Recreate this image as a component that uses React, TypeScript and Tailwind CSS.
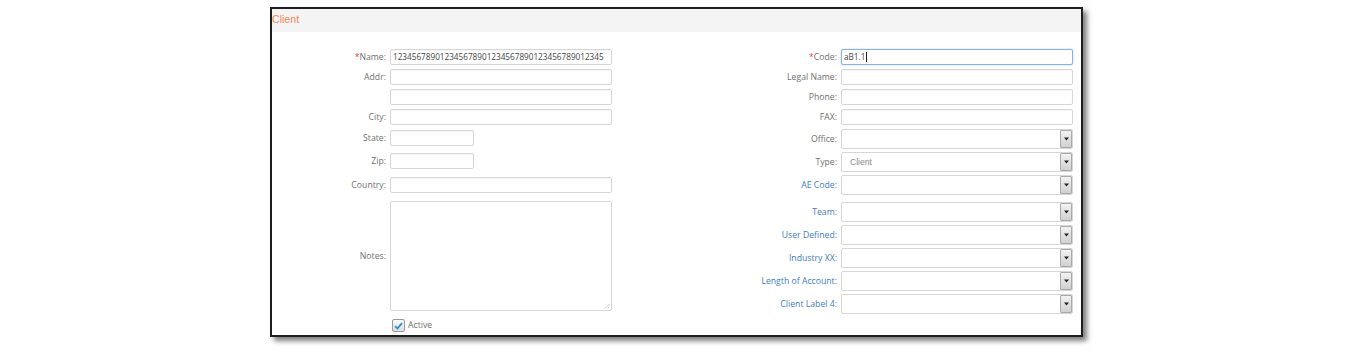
import type { ReactNode } from 'react'

const labelCls = "text-[8.7px] leading-none whitespace-nowrap"

function Label({ children, blue, required, w }: { children: ReactNode; blue?: boolean; required?: boolean; w: string }) {
  return (
    <div className={`${w} shrink-0 pr-[4px] text-right ${labelCls} ${blue ? 'text-[#3f7cc0]' : 'text-[#707070]'}`}>
      {required && <span className="text-[#e8443a]">*</span>}
      {children}
    </div>
  )
}

function TextBox({ w, value, focus }: { w: string; value?: string; focus?: boolean }) {
  return (
    <div
      className={`${w} h-[16px] rounded-[2px] bg-white flex items-center pl-[2px] text-[8.2px] text-[#444] ${
        focus ? 'border border-[#86b3e3] shadow-[0_0_2px_#a9cdf0]' : 'border border-[#d6d6d6] shadow-[inset_0_1px_1px_rgba(0,0,0,0.04)]'
      }`}
    >
      {value}
      {focus && <span className="ml-[1px] inline-block w-[1px] h-[10px] bg-[#222]" />}
    </div>
  )
}

function Select({ value }: { value?: string }) {
  return (
    <div className="w-[232px] h-[20px] rounded-[2px] border border-[#d6d6d6] bg-white flex items-center">
      <div className="flex-1 pl-[8px] text-[8.6px] text-[#8a8a8a]" style={{ fontFamily: '"Liberation Sans", Arial, sans-serif' }}>
        {value}
      </div>
      <div className="w-[12px] h-[18px] border border-[#a9a9a9] rounded-[1px] bg-gradient-to-b from-[#f2f2f2] to-[#d0d0d0] flex items-center justify-center">
        <svg width="5" height="4" viewBox="0 0 5 4">
          <path d="M0 0.5h5L2.5 3.5z" fill="#222" />
        </svg>
      </div>
    </div>
  )
}

function LRow({ label, required, children, mt, h = 'h-[16px]' }: { label: string; required?: boolean; children: ReactNode; mt: string; h?: string }) {
  return (
    <div className={`flex items-center ${mt} ${h}`}>
      <Label w="w-[118px]" required={required}>{label}</Label>
      {children}
    </div>
  )
}

function RRow({ label, blue, required, children, mt, h = 'h-[20px]' }: { label: string; blue?: boolean; required?: boolean; children: ReactNode; mt: string; h?: string }) {
  return (
    <div className={`flex items-center ${mt} ${h}`}>
      <Label w="w-[229px]" blue={blue} required={required}>{label}</Label>
      {children}
    </div>
  )
}

export default function App() {
  return (
    <div className="w-[1367px] h-[352px] bg-white" style={{ fontFamily: '"Open Sans", "Noto Sans", sans-serif' }}>
      <div className="pt-[7px] pl-[270px]">
        <div className="w-[813px] h-[330px] border-2 border-[#1e1e1e] bg-white shadow-[4px_4px_5px_rgba(0,0,0,0.5)]">
          <div className="h-[23px] bg-[#f4f4f4] flex items-center pb-[2px]">
            <span className="text-[10.6px] text-[#f2845a]" style={{ fontFamily: '"Liberation Sans", Arial, sans-serif' }}>
              Client
            </span>
          </div>
          <div className="flex pt-[17px]">
            {/* left column */}
            <div className="flex flex-col w-[340px]">
              <LRow label="Name:" required mt="mt-0">
                <TextBox w="w-[222px]" value="123456789012345678901234567890123456789012345" />
              </LRow>
              <LRow label="Addr:" mt="mt-[4px]">
                <TextBox w="w-[222px]" />
              </LRow>
              <LRow label="" mt="mt-[4px]">
                <TextBox w="w-[222px]" />
              </LRow>
              <LRow label="City:" mt="mt-[4px]">
                <TextBox w="w-[222px]" />
              </LRow>
              <LRow label="State:" mt="mt-[5px]">
                <TextBox w="w-[84px]" />
              </LRow>
              <LRow label="Zip:" mt="mt-[7px]">
                <TextBox w="w-[84px]" />
              </LRow>
              <LRow label="Country:" mt="mt-[8px]">
                <TextBox w="w-[222px]" />
              </LRow>
              <LRow label="Notes:" mt="mt-[8px]" h="h-[110px]">
                <div className="relative w-[222px] h-[110px] rounded-[2px] border border-[#d6d6d6] bg-white">
                  <svg className="absolute right-[1px] bottom-[1px]" width="6" height="6" viewBox="0 0 6 6">
                    <path d="M5.5 1L1 5.5M5.5 3.5L3.5 5.5" stroke="#bbb" strokeWidth="0.8" />
                  </svg>
                </div>
              </LRow>
              <div className="flex items-center mt-[8px] h-[13px] pl-[120px]">
                <div className="w-[13px] h-[13px] rounded-[2px] border border-[#9a9a9a] bg-gradient-to-b from-[#fafafa] to-[#dedede] flex items-center justify-center">
                  <svg width="9" height="8" viewBox="0 0 9 8">
                    <path d="M1 4.2L3.4 6.5L8 1.2" fill="none" stroke="#2a8fd6" strokeWidth="1.8" />
                  </svg>
                </div>
                <span className="ml-[3px] text-[8.7px] text-[#707070]">Active</span>
              </div>
            </div>
            {/* right column */}
            <div className="flex flex-col">
              <RRow label="Code:" required mt="mt-0" h="h-[16px]">
                <TextBox w="w-[232px]" value="aB1.1" focus />
              </RRow>
              <RRow label="Legal Name:" mt="mt-[4px]" h="h-[16px]">
                <TextBox w="w-[232px]" />
              </RRow>
              <RRow label="Phone:" mt="mt-[4px]" h="h-[16px]">
                <TextBox w="w-[232px]" />
              </RRow>
              <RRow label="FAX:" mt="mt-[4px]" h="h-[16px]">
                <TextBox w="w-[232px]" />
              </RRow>
              <RRow label="Office:" mt="mt-[4px]">
                <Select />
              </RRow>
              <RRow label="Type:" mt="mt-[3px]">
                <Select value="Client" />
              </RRow>
              <RRow label="AE Code:" blue mt="mt-[3px]">
                <Select />
              </RRow>
              <RRow label="Team:" blue mt="mt-[7px]">
                <Select />
              </RRow>
              <RRow label="User Defined:" blue mt="mt-[3px]">
                <Select />
              </RRow>
              <RRow label="Industry XX:" blue mt="mt-[3px]">
                <Select />
              </RRow>
              <RRow label="Length of Account:" blue mt="mt-[3px]">
                <Select />
              </RRow>
              <RRow label="Client Label 4:" blue mt="mt-[3px]">
                <Select />
              </RRow>
            </div>
          </div>
        </div>
      </div>
    </div>
  )
}
